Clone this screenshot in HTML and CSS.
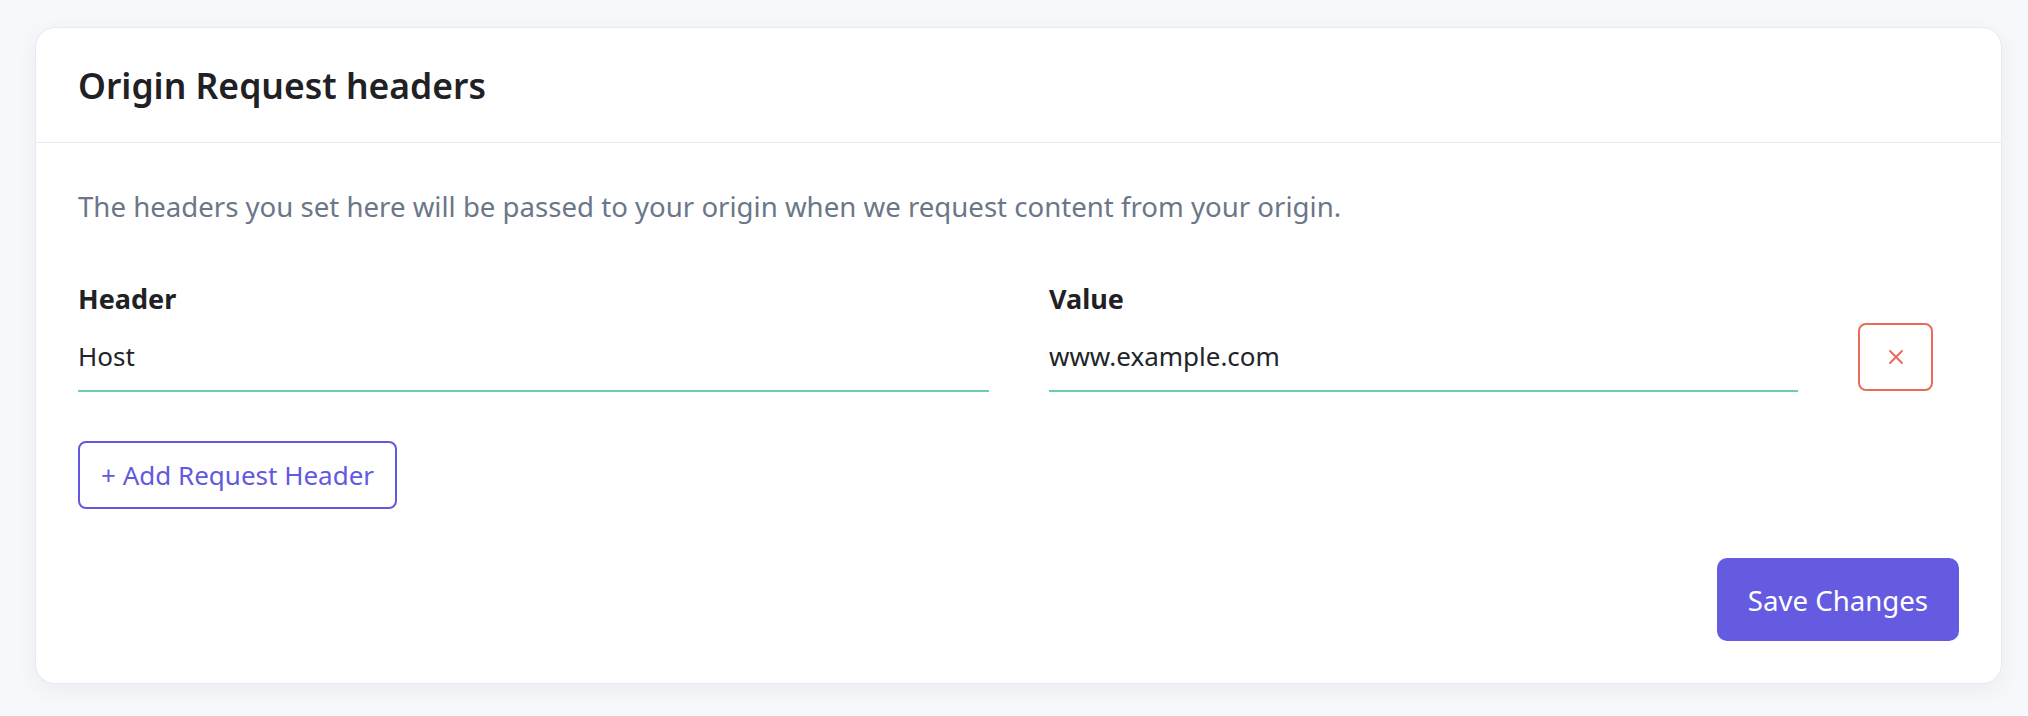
FILE: index.html
```html
<!DOCTYPE html>
<html lang="en">
<head>
<meta charset="utf-8">
<title>Origin Request headers</title>
<link rel="stylesheet" href="styles.css">
</head>
<body>
  <section class="card">
    <header class="card-head">
      <h2 class="card-title">Origin Request headers</h2>
    </header>
    <div class="card-body">
      <p class="desc">The headers you set here will be passed to your origin when we request content from your origin.</p>
      <div class="header-row">
        <label class="field">
          <span class="field-label">Header</span>
          <input class="field-input" type="text" value="Host">
        </label>
        <label class="field">
          <span class="field-label">Value</span>
          <input class="field-input" type="text" value="www.example.com">
        </label>
        <button class="remove-btn" type="button" aria-label="Remove header">
          <svg width="16" height="16" viewBox="0 0 16 16" aria-hidden="true">
            <path d="M2 2 L14 14 M14 2 L2 14" stroke="currentColor" stroke-width="2" stroke-linecap="round" fill="none"/>
          </svg>
        </button>
      </div>
      <button class="add-btn" type="button">+ Add Request Header</button>
      <div class="actions">
        <button class="save-btn" type="button">Save Changes</button>
      </div>
    </div>
  </section>
</body>
</html>
```
FILE: styles.css
```css
* { box-sizing: border-box; }

html, body {
  margin: 0;
  padding: 0;
}

body {
  background: #f7f8fb;
  font-family: "Noto Sans", "Open Sans", sans-serif;
  color: #222428;
  padding: 27px 26px 0 35px;
  min-height: 716px;
}

.card {
  width: 1967px;
  background: #ffffff;
  border: 1px solid #e8eaf2;
  border-radius: 20px;
  box-shadow: 0 6px 22px rgba(40, 50, 90, 0.06);
}

.card-head {
  padding: 34px 42px 34px;
  border-bottom: 1px solid #e9eaf4;
}

.card-title {
  margin: 0;
  font-size: 35.5px;
  line-height: 46px;
  font-weight: 600;
  color: #1f2124;
}

.card-body {
  padding: 45px 42px 42px;
}

.desc {
  margin: 0 0 57px;
  font-size: 27.6px;
  line-height: 36px;
  color: #6b7789;
}

.header-row {
  display: grid;
  grid-template-columns: 911px 749px 75px;
  column-gap: 60px;
  align-items: end;
}

.field {
  display: flex;
  flex-direction: column;
}

.field-label {
  font-size: 27px;
  line-height: 36px;
  font-weight: 700;
  color: #1f2124;
  margin-bottom: 8px;
}

.field-input {
  font-family: inherit;
  font-size: 26px;
  line-height: 36px;
  height: 67px;
  color: #222428;
  border: 0;
  border-bottom: 2px solid #6bd0a6;
  padding: 13px 0 16px;
  margin: 0;
  background: transparent;
  outline: none;
}

.remove-btn {
  width: 75px;
  height: 68px;
  margin-bottom: 1px;
  border: 2px solid #e96b5c;
  border-radius: 8px;
  background: #fff;
  color: #e96b5c;
  display: flex;
  align-items: center;
  justify-content: center;
  padding: 0;
}

.add-btn {
  margin-top: 49px;
  font-family: inherit;
  font-size: 26px;
  line-height: 36px;
  padding: 14px 21px;
  border: 2px solid #6259e0;
  border-radius: 8px;
  background: #fff;
  color: #6259e0;
}

.actions {
  display: flex;
  justify-content: flex-end;
  margin-top: 49px;
}

.save-btn {
  font-family: inherit;
  font-size: 27.6px;
  line-height: 38px;
  padding: 23px 31px 22px;
  border: 0;
  border-radius: 10px;
  background: #655be1;
  color: #ffffff;
}
```
